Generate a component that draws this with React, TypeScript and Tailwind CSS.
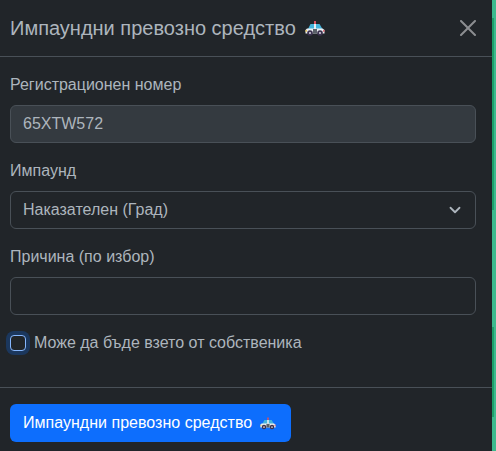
import React from 'react';
import { ChevronDown } from 'lucide-react';

const PoliceCar = ({ className }: { className: string }) => (
  <svg viewBox="0 0 20 15" className={className} aria-hidden="true">
    <rect x="9" y="0" width="2" height="3" fill="#d8505f" />
    <path d="M5.5 3h9l3 5H3z" fill="#45b4dc" />
    <path d="M9 3h2v5H9z" fill="#e8eef2" />
    <path d="M2 7.5h15.5l2 1.5v3.5H.5V9z" fill="#eceff2" />
    <path d="M8 8h4v4.5H8z" fill="#5a6068" />
    <circle cx="5" cy="12" r="2.8" fill="#3d3350" />
    <circle cx="5" cy="12" r="1.1" fill="#cfcfd8" />
    <circle cx="15" cy="12" r="2.8" fill="#3d3350" />
    <circle cx="15" cy="12" r="1.1" fill="#cfcfd8" />
    <rect x="0.5" y="9" width="1.3" height="1.8" fill="#e8c14a" />
    <rect x="18.2" y="9" width="1.3" height="1.8" fill="#d8505f" />
  </svg>
);

const Label = ({ children }: { children: React.ReactNode }) => (
  <label className="mb-2 block h-6 leading-6 text-[#adb5bd]">{children}</label>
);

export default function App() {
  return (
    <div className="flex h-[451px] w-[496px] overflow-hidden bg-[#212529] font-['Liberation_Sans',sans-serif] text-base">
      <div className="flex w-[492px] flex-col">
        <div className="flex h-[57px] items-center justify-between border-b border-[#495057] pl-[10px] pr-4">
          <h5 className="flex items-center gap-[9px] text-xl leading-6 text-[#adb5bd]">
            Импаундни превозно средство
            <PoliceCar className="h-[15px] w-5" />
          </h5>
          <svg viewBox="0 0 16 16" className="h-4 w-4 fill-[#8c8e91]" aria-hidden="true">
            <path d="M.293.293a1 1 0 0 1 1.414 0L8 6.586 14.293.293a1 1 0 1 1 1.414 1.414L9.414 8l6.293 6.293a1 1 0 0 1-1.414 1.414L8 9.414l-6.293 6.293a1 1 0 0 1-1.414-1.414L6.586 8 .293 1.707a1 1 0 0 1 0-1.414z" />
          </svg>
        </div>
        <div className="flex h-[331px] flex-col border-b border-[#495057] pl-[10px] pr-4 pt-4">
          <Label>Регистрационен номер</Label>
          <div className="flex h-[38px] items-center rounded-md border border-[#495057] bg-[#343a40] px-3 text-[#adb5bd]">
            65XTW572
          </div>
          <div className="mt-4">
            <Label>Импаунд</Label>
          </div>
          <div className="flex h-[38px] items-center justify-between rounded-md border border-[#495057] pl-3 pr-[11px] text-[#adb5bd]">
            Наказателен (Град)
            <ChevronDown className="h-[18px] w-[18px] text-[#adb5bd]" strokeWidth={2.4} />
          </div>
          <div className="mt-4">
            <Label>Причина (по избор)</Label>
          </div>
          <div className="h-[38px] rounded-md border border-[#495057]" />
          <div className="mt-5 flex h-4 items-center gap-2 text-[#adb5bd]">
            <span className="h-4 w-4 rounded-[4px] border border-[#86b7fe] bg-[#212529] shadow-[0_0_0_4px_rgba(13,110,253,0.25)]" />
            Може да бъде взето от собственика
          </div>
        </div>
        <div className="pl-[10px] pt-4">
          <button className="flex h-[38px] items-center gap-2 rounded-md bg-[#0d6efd] pl-[13px] pr-[15px] tracking-[0.02px] text-white">
            Импаундни превозно средство
            <PoliceCar className="h-[13px] w-4" />
          </button>
        </div>
      </div>
      <div className="flex w-1 flex-col bg-[#3dba8e]">
        <div className="h-[18px]" />
        <div className="h-[192px] border-r-2 border-[#3dba8e] bg-[#1f9e6a]" />
        <div className="h-[117px]" />
        <div className="h-[90px] border-r-2 border-[#3dba8e] bg-[#1f9e6a]" />
      </div>
    </div>
  );
}
